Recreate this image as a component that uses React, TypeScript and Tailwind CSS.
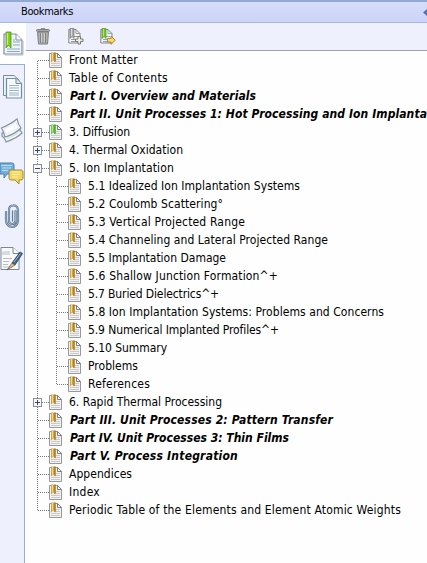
import React from "react";

type Row = { t: string; w: number; level?: number; bold?: boolean; box?: "+" | "-"; green?: boolean; last?: boolean };

const rows: Row[] = [
  { t: "Front Matter", w: 69 },
  { t: "Table of Contents", w: 99 },
  { t: "Part I. Overview and Materials", w: 186, bold: true },
  { t: "Part II. Unit Processes 1: Hot Processing and Ion Implanta", w: 357, bold: true },
  { t: "3. Diffusion", w: 61, box: "+", green: true },
  { t: "4. Thermal Oxidation", w: 114, box: "+" },
  { t: "5. Ion Implantation", w: 105, box: "-" },
  { t: "5.1 Idealized Ion Implantation Systems", w: 212, level: 1 },
  { t: "5.2 Coulomb Scattering°", w: 135, level: 1 },
  { t: "5.3 Vertical Projected Range", w: 157, level: 1 },
  { t: "5.4 Channeling and Lateral Projected Range", w: 240, level: 1 },
  { t: "5.5 Implantation Damage", w: 138, level: 1 },
  { t: "5.6 Shallow Junction Formation^+", w: 190, level: 1 },
  { t: "5.7 Buried Dielectrics^+", w: 131, level: 1 },
  { t: "5.8 Ion Implantation Systems: Problems and Concerns", w: 296, level: 1 },
  { t: "5.9 Numerical Implanted Profiles^+", w: 191, level: 1 },
  { t: "5.10 Summary", w: 79, level: 1 },
  { t: "Problems", w: 50, level: 1 },
  { t: "References", w: 62, level: 1, last: true },
  { t: "6. Rapid Thermal Processing", w: 153, box: "+" },
  { t: "Part III. Unit Processes 2: Pattern Transfer", w: 263, bold: true },
  { t: "Part IV. Unit Processes 3: Thin Films", w: 219, bold: true },
  { t: "Part V. Process Integration", w: 168, bold: true },
  { t: "Appendices", w: 63 },
  { t: "Index", w: 31 },
  { t: "Periodic Table of the Elements and Element Atomic Weights", w: 332, last: true },
];

// Label whose tracking is adjusted so that it fills the given width.
function Label({ text, width, bold, small }: { text: string; width: number; bold?: boolean; small?: boolean }) {
  const ref = React.useRef<HTMLSpanElement>(null);
  const [gap, setGap] = React.useState(0);
  React.useLayoutEffect(() => {
    if (ref.current) setGap((width - ref.current.getBoundingClientRect().width) / text.length);
  }, [text, width]);
  return (
    <span
      ref={ref}
      className={`shrink-0 whitespace-pre leading-[18px] text-black ${small ? "text-[11px]" : "text-[12px]"} ${bold ? "font-bold italic" : ""}`}
      style={{ letterSpacing: gap }}
    >
      {text}
    </span>
  );
}

function Connector({ row, first }: { row: Row; first: boolean }) {
  const child = row.level === 1;
  const end = row.last && !child;
  return (
    <svg className="shrink-0" width={child ? 36 : 17} height="18" viewBox={`0 0 ${child ? 36 : 17} 18`} shapeRendering="crispEdges">
      <g stroke="#777" strokeDasharray="1 1" fill="none">
        <path d={`M5.5 ${first ? 10 : 0}V${end ? 10 : 18}`} />
        {child ? <path d={`M24.5 0V${row.last ? 10 : 18}M25 9.5H36`} /> : <path d="M6 9.5H17" />}
      </g>
      {row.box && (
        <g>
          <rect x="1.5" y="5.5" width="8" height="8" fill="#f7f7f7" stroke="#8c8f96" />
          <path d={row.box === "+" ? "M3 9.5H8M5.5 7V12" : "M3 9.5H8"} stroke="#33477c" />
        </g>
      )}
    </svg>
  );
}

function PageIcon({ green }: { green?: boolean }) {
  return (
    <svg className="shrink-0" width="14" height="18" viewBox="0 0 14 18">
      <path d="M.5 2.5H8.5L12.5 6.5V16.5H.5Z" fill="#f2f2f3" stroke="#98989b" />
      <path d="M8.5 2.5V6.5H12.5Z" fill="#fff" stroke="#7c7c80" />
      <path d="M7 8.5H11M7 10.5H11M2 12.5H11M2 14.5H11" stroke="#c9c9cd" />
      <path d="M2 1.5H6.5V11.5L4.3 9.5L2 11.5Z" fill={green ? "#66c444" : "#cda23a"} />
      <path d="M3.5 2V9.5" stroke={green ? "#b0ea8b" : "#f2dc86"} strokeWidth="1.2" />
      <path d="M6 1.5V11" stroke={green ? "#438f2b" : "#8e681d"} strokeWidth="1" />
    </svg>
  );
}

function Bookmark() {
  return (
    <svg width="22" height="26" viewBox="0 0 22 26">
      <path d="M2 3H14L20 9V23H2Z" fill="#edf5fb" stroke="#7f929e" strokeWidth="1.2" />
      <path d="M3 24H21V10" fill="none" stroke="#b6bec3" />
      <path d="M14 3V9H20" fill="#fff" stroke="#7f929e" />
      <path d="M11 9H13M11 11H18M11 14H18M5 18H18M5 20.5H18" stroke="#91a7b5" />
      <path d="M4 1H9V17L6.5 14L4 17Z" fill="#7fc820" stroke="#529b19" strokeWidth=".8" />
      <path d="M5.5 2V14" stroke="#c2ed6d" strokeWidth="1.4" />
    </svg>
  );
}

function Pages() {
  return (
    <svg width="22" height="26" viewBox="0 0 22 26">
      <path d="M1.5 1.5H12L17 6V21.5H1.5Z" fill="#e9f2fa" stroke="#758da0" />
      <path d="M4.5 4.5H14L19.5 9.5V24H4.5Z" fill="#f5faff" stroke="#758da0" strokeWidth="1.2" />
      <path d="M14 4.5V9.5H19.5" fill="#d6e6f2" stroke="#758da0" />
      <path d="M7 11.5H17M7 14H17M7 16.5H17M7 19H17M7 21H17" stroke="#9db2c2" />
    </svg>
  );
}

function Layers() {
  return (
    <svg width="24" height="28" viewBox="0 0 24 28">
      <path d="M2 16L19 10Q20 14 22 16Q17 21 6 25Q5 21 2 19Z" fill="#dce6ed" stroke="#8795a0" strokeWidth="1.2" />
      <path d="M4 19L7 23Q16 20 21 15" fill="none" stroke="#fff" />
      <path d="M1.5 11Q11 7 17 2Q18 7 21 11Q15 17 5 20Q4 15 1.5 11Z" fill="#fdfefe" stroke="#81909c" strokeWidth="1.2" />
      <path d="M4 12L16 5L18.5 11L6 17.5Z" fill="none" stroke="#d3dce3" strokeWidth=".7" />
    </svg>
  );
}

function Comments() {
  return (
    <svg width="24" height="24" viewBox="0 0 24 24">
      <path d="M0 1H12Q14 1 14 3V10Q14 12 12 12H7L4 16V12H0Z" fill="#78afd9" stroke="#4b7fad" />
      <path d="M1 3.5H12M2 6H11M2 8.5H8" stroke="#b8dcf3" />
      <path d="M11 8H21Q23 8 23 10V16Q23 18 21 18H19V22L15 18H11Q9 18 9 16V10Q9 8 11 8Z" fill="#efd665" stroke="#a68b31" />
      <path d="M12 10H20M12 12.5H20M12 15H18" stroke="#fff0a1" />
    </svg>
  );
}

function Clip() {
  return (
    <svg width="18" height="26" viewBox="0 0 18 26" fill="none" strokeLinecap="round">
      <path d="M11.5 7V17Q11 20 8.5 20Q5 20 5 17V6Q5 1.5 9 1.5Q14 1 14 7V17Q13 23 8 23Q2 22 2 16V8" stroke="#5b7890" strokeWidth="2.2" />
      <path d="M11.5 7V17Q11 20 8.5 20Q5 20 5 17V6Q5 1.5 9 1.5Q14 1 14 7V17Q13 23 8 23Q2 22 2 16V8" stroke="#a8c0d2" strokeWidth=".8" />
      <path d="M8.5 7V17" stroke="#60809a" strokeWidth="1.3" />
    </svg>
  );
}

function Sign() {
  return (
    <svg width="24" height="26" viewBox="0 0 24 26">
      <path d="M1 1.5H13L19 7.5V23.5H1Z" fill="#f9fafb" stroke="#7c868f" />
      <path d="M13 1.5V7.5H19" fill="#fff" stroke="#7c868f" />
      <path d="M3 5.5V9M5 5V9M7 5V9M9 5V9M3 12.5H12M3 15.5H9M3 18.5H8M3 21H12" stroke="#b6bdc3" />
      <path d="M12 17L20 6L22.5 7.5L15 19Z" fill="#42688d" stroke="#27394d" strokeWidth=".8" />
      <path d="M7 24L12 17L15 19Z" fill="#edb878" stroke="#555" strokeWidth=".7" />
      <path d="M14 16L20.5 7.5" stroke="#9bb9d5" />
    </svg>
  );
}

function Trash() {
  return (
    <svg width="14" height="17" viewBox="0 0 14 17">
      <path d="M5 2V.7H9V2M1.5 4H12.5L11.5 16H2.5Z" fill="#b0b0b0" stroke="#808080" />
      <path d="M4.5 5V15M7 5V15M9.5 5V15" stroke="#777" strokeWidth=".8" />
      <path d="M5.7 5V14M8.2 5V14" stroke="#ddd" strokeWidth=".8" />
      <rect x=".5" y="1.5" width="13" height="2" rx="1" fill="#a9a9a9" stroke="#7d7d7d" />
    </svg>
  );
}

function ToolPage({ green }: { green?: boolean }) {
  return (
    <svg width="16" height="17" viewBox="0 0 16 17">
      <path d="M.8 1.5H8L12 5.5V15H.8Z" fill="#f4f4f4" stroke="#858585" />
      <path d="M8 1.5V5.5H12M6 8.5H10M3 11.5H8M3 13.5H8" fill="none" stroke={green ? "#91a7b3" : "#999"} />
      <path d="M2 .5H6V10.5L4 8.5L2 10.5Z" fill={green ? "#78c328" : "#aaa"} stroke={green ? "#4b9825" : "#777"} strokeWidth=".7" />
      <path d="M3.5 1V8" stroke={green ? "#b8e86f" : "#ddd"} />
      {green ? (
        <path d="M7.5 10.5H11V8.2L15.3 12.2L11 16.3V14H7.5Z" fill="#ffda66" stroke="#a7762b" strokeWidth=".9" />
      ) : (
        <path d="M10 8.5H12.5V11H15V13.5H12.5V16H10V13.5H7.5V11H10Z" fill="#eee" stroke="#6b6b6b" strokeWidth=".9" />
      )}
    </svg>
  );
}

export default function App() {
  return (
    <div className="flex h-[563px] w-[427px] flex-col overflow-hidden bg-[#fefefe] font-['Tahoma','DejaVu_Sans_Condensed','DejaVu_Sans',sans-serif]">
      <header className="flex h-[23px] shrink-0 items-center justify-between border-b border-t-2 border-b-[#abb6d9] border-t-[#92aad2] bg-gradient-to-b from-[#d6ddfb] to-[#cbd4f8] pl-[21px]">
        <Label text="Bookmarks" width={52} small />
        <svg width="4" height="7" viewBox="0 0 4 7"><path d="M4 0L0 3.5L4 7Z" fill="#5871b3" /></svg>
      </header>
      <div className="flex min-h-0 flex-1">
        <aside className="flex w-[26px] shrink-0 flex-col">
          <div className="h-[41px] bg-white pl-[2px] pt-[8px]"><Bookmark /></div>
          <div className="flex w-[25px] flex-1 flex-col border-r border-t border-[#9badd4] bg-[#eef0fd]">
            <div className="h-[52px] pl-[2px] pt-[9px]"><Pages /></div>
            <div className="h-[45px]"><Layers /></div>
            <div className="h-[42px]"><Comments /></div>
            <div className="h-[42px] pl-[4px]"><Clip /></div>
            <Sign />
          </div>
        </aside>
        <main className="flex min-w-0 flex-1 flex-col">
          <div className="flex h-[28px] shrink-0 items-center gap-[17px] border-b border-[#9ba0b2] bg-[#eef0fd] pl-[10px]">
            <Trash />
            <div className="flex gap-[16px] pl-[1px]"><ToolPage /><ToolPage green /></div>
          </div>
          <div className="flex flex-col pl-[6px]">
            {rows.map((row, i) => (
              <div key={row.t} className="flex h-[18px] shrink-0 items-center">
                <Connector row={row} first={i === 0} />
                <PageIcon green={row.green} />
                <div className={row.bold ? "flex pl-[7px]" : "flex pl-[6px]"}>
                  <Label text={row.t} width={row.w} bold={row.bold} />
                </div>
              </div>
            ))}
          </div>
        </main>
      </div>
    </div>
  );
}
